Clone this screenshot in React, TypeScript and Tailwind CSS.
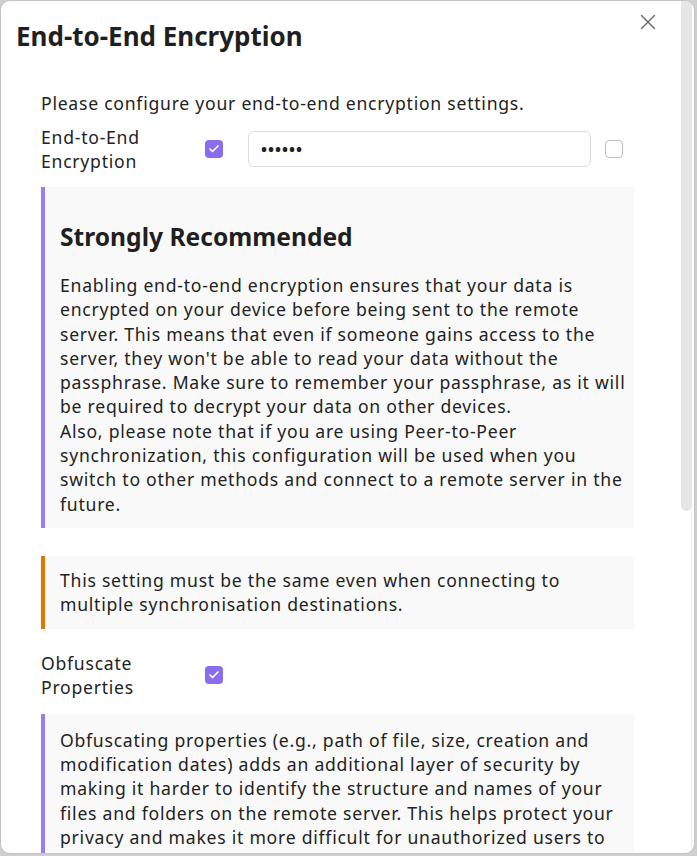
import { X, Check } from "lucide-react";

const RECOMMEND_LINES = [
  "Enabling end-to-end encryption ensures that your data is",
  "encrypted on your device before being sent to the remote",
  "server. This means that even if someone gains access to the",
  "server, they won't be able to read your data without the",
  "passphrase. Make sure to remember your passphrase, as it will",
  "be required to decrypt your data on other devices.",
  "Also, please note that if you are using Peer-to-Peer",
  "synchronization, this configuration will be used when you",
  "switch to other methods and connect to a remote server in the",
  "future.",
];

const OBFUSCATE_LINES = [
  "Obfuscating properties (e.g., path of file, size, creation and",
  "modification dates) adds an additional layer of security by",
  "making it harder to identify the structure and names of your",
  "files and folders on the remote server. This helps protect your",
  "privacy and makes it more difficult for unauthorized users to",
  "infer information about your data.",
];

function Checkbox({ checked }: { checked: boolean }) {
  if (checked) {
    return (
      <span className="flex w-[18px] h-[18px] items-center justify-center rounded-[4px] bg-[#8a6cef]">
        <Check className="w-3 h-3 text-white" strokeWidth={3.5} />
      </span>
    );
  }
  return <span className="block w-[18px] h-[18px] rounded-[4px] border border-[#bdbdbd] bg-white" />;
}

function Lines({ lines }: { lines: string[] }) {
  return (
    <p>
      {lines.map((l, i) => (
        <span key={i} className="block whitespace-nowrap">
          {l}
        </span>
      ))}
    </p>
  );
}

export default function App() {
  return (
    <div
      className="w-[697px] h-[856px] bg-[#cfcfcf] text-[#222222] overflow-hidden"
      style={{ fontFamily: '"Noto Sans", "Open Sans", sans-serif' }}
    >
      <div className="relative w-[695px] h-[854px] bg-white rounded-[10px] border border-[#c4c4c4] overflow-hidden">
        {/* scrollbar */}
        <div className="absolute right-[2px] top-0 w-[11px] h-[510px] bg-[#e6e6e6] rounded-b-[6px]" />
        <div className="absolute right-[2px] top-[510px] bottom-0 w-px bg-[#ededed]" />

        <button className="absolute left-[634px] top-[8px] w-[26px] h-[26px] flex items-center justify-center text-[#6b6b6b]">
          <X className="w-[26px] h-[26px]" strokeWidth={1.3} />
        </button>

        <h1 className="pl-[15px] pt-[19px] text-[26px] leading-8 font-bold text-[#1f1f1f]">
          End-to-End Encryption
        </h1>

        <div className="pl-[40px] w-[633px] text-[17.6px] tracking-[0.75px] leading-[24px]">
          <p className="mt-[39px]">Please configure your end-to-end encryption settings.</p>

          <div className="mt-[10px] flex items-center">
            <div className="w-[164px]">
              End-to-End
              <br />
              Encryption
            </div>
            <Checkbox checked />
            <div className="ml-[25px] w-[343px] h-9 flex items-center rounded-[6px] border border-[#dcdcdc] px-3 text-[16px] font-bold tracking-[1px]">
              ••••••
            </div>
            <span className="ml-[14px]">
              <Checkbox checked={false} />
            </span>
          </div>

          <div className="mt-[14px] border-l-4 border-[#9a7ef0] bg-[#f9f9f9] pl-[15px] pr-4 pt-[34px] pb-3">
            <h2 className="text-[24.6px] tracking-normal leading-8 font-bold text-[#1f1f1f]">
              Strongly Recommended
            </h2>
            <div className="mt-5 leading-[24.3px]">
              <Lines lines={RECOMMEND_LINES} />
            </div>
          </div>

          <div className="mt-[28px] border-l-4 border-[#e07800] bg-[#f9f9f9] pl-[15px] pr-4 py-3 leading-[24.5px]">
            This setting must be the same even when connecting to
            <br />
            multiple synchronisation destinations.
          </div>

          <div className="mt-[22px] flex items-center">
            <div className="w-[164px]">
              Obfuscate
              <br />
              Properties
            </div>
            <Checkbox checked />
          </div>

          <div className="mt-[15px] border-l-4 border-[#9a7ef0] bg-[#f9f9f9] pl-[15px] pr-4 pt-[14px] pb-3 leading-[24.2px]">
            <Lines lines={OBFUSCATE_LINES} />
          </div>
        </div>
      </div>
    </div>
  );
}
